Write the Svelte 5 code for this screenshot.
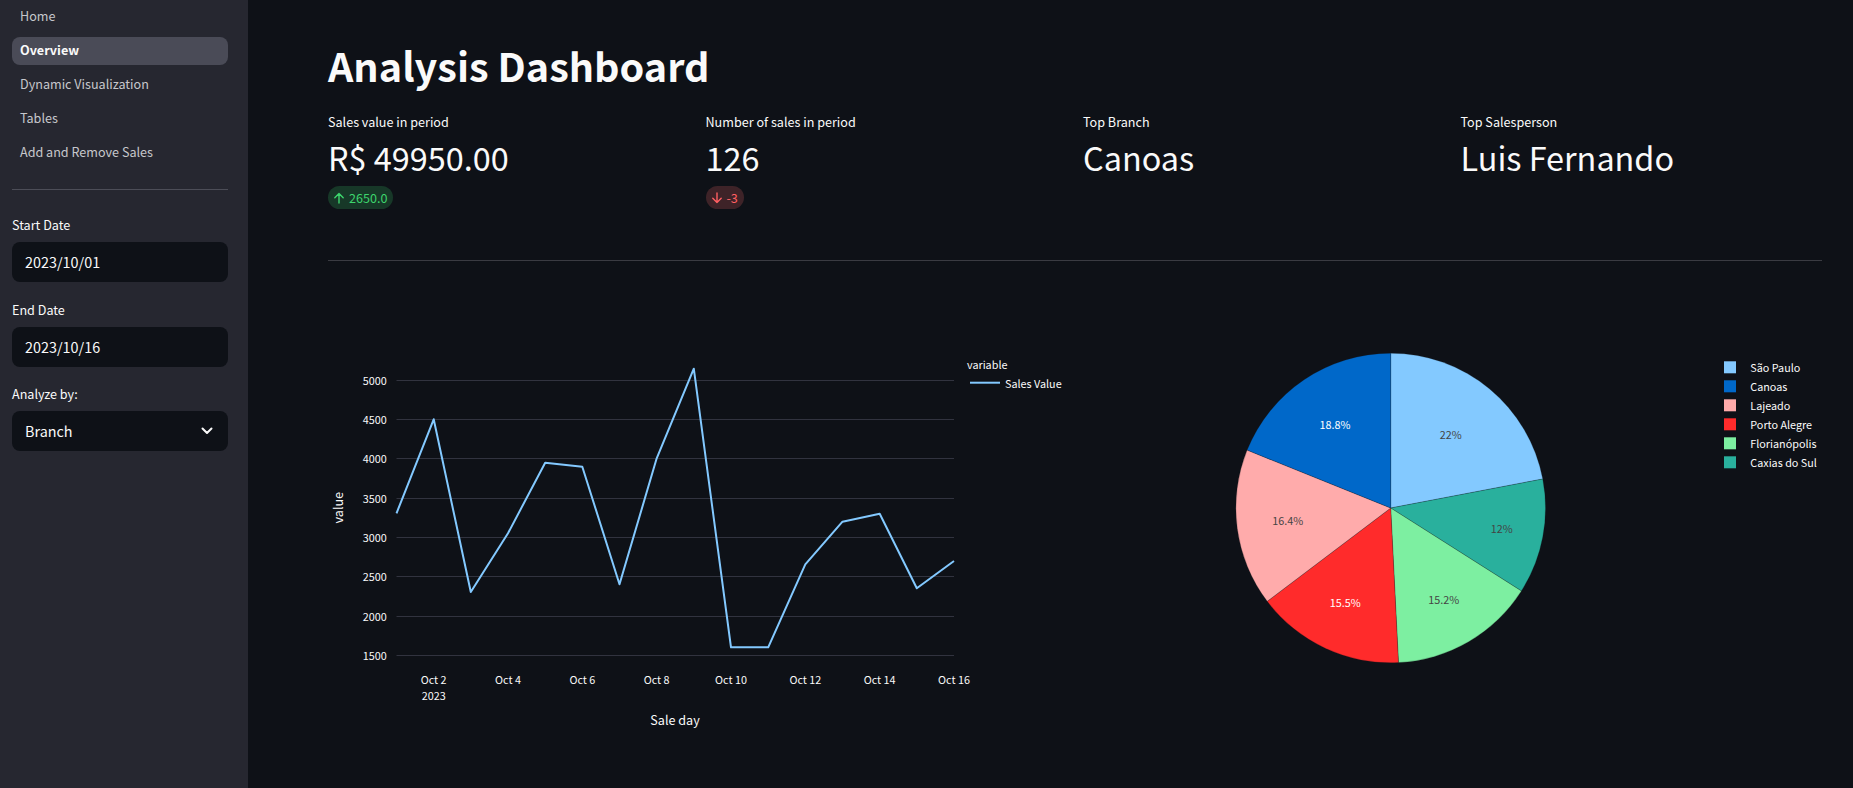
<script>
  const nav = ['Home', 'Overview', 'Dynamic Visualization', 'Tables', 'Add and Remove Sales'];

  const metrics = [
    { label: 'Sales value in period', value: 'R$ 49950.00', delta: '2650.0', dir: 'up' },
    { label: 'Number of sales in period', value: '126', delta: '-3', dir: 'down' },
    { label: 'Top Branch', value: 'Canoas' },
    { label: 'Top Salesperson', value: 'Luis Fernando' }
  ];

  // line chart: page-aligned coordinates through the svg viewBox
  const ticksY = [
    { t: '5000', y: 380.5 }, { t: '4500', y: 419.5 }, { t: '4000', y: 458.5 }, { t: '3500', y: 498.5 },
    { t: '3000', y: 537.5 }, { t: '2500', y: 576.5 }, { t: '2000', y: 616.5 }, { t: '1500', y: 655.5 }
  ];
  const x0 = 396.5;
  const dx = (954 - 396.5) / 15;
  const ys = [513.3, 419.3, 592, 533.3, 462.7, 466.7, 584.3, 458.3, 368.7, 647.3, 647.3, 564.3, 521.7, 513.7, 588.3, 561];
  const points = ys.map((y, i) => `${(x0 + dx * i).toFixed(1)},${y}`).join(' ');
  const ticksX = ['Oct 2', 'Oct 4', 'Oct 6', 'Oct 8', 'Oct 10', 'Oct 12', 'Oct 14', 'Oct 16']
    .map((t, i) => ({ t, x: x0 + dx * (1 + 2 * i) }));

  // pie
  const cx = 1390.7, cy = 508, r = 154.8;
  const slices = [
    { name: 'São Paulo', pct: 22, label: '22%', color: '#83c9ff', lx: 1450.7, ly: 435, ink: '#444' },
    { name: 'Caxias do Sul', pct: 12, label: '12%', color: '#29b09d', lx: 1501.7, ly: 529.3, ink: '#444' },
    { name: 'Florianópolis', pct: 15.2, label: '15.2%', color: '#7defa1', lx: 1443.7, ly: 600, ink: '#444' },
    { name: 'Porto Alegre', pct: 15.5, label: '15.5%', color: '#ff2b2b', lx: 1345.3, ly: 603.3, ink: '#fff' },
    { name: 'Lajeado', pct: 16.4, label: '16.4%', color: '#ffabab', lx: 1287.7, ly: 521.3, ink: '#444' },
    { name: 'Canoas', pct: 18.9, label: '18.8%', color: '#0068c9', lx: 1335, ly: 425.3, ink: '#fff' }
  ];
  let acc = 0;
  const arcs = slices.map((s) => {
    const a0 = (acc / 100) * 2 * Math.PI;
    acc += s.pct;
    const a1 = (acc / 100) * 2 * Math.PI;
    const large = s.pct > 50 ? 1 : 0;
    const d = `M${cx} ${cy}L${(cx + r * Math.sin(a0)).toFixed(2)} ${(cy - r * Math.cos(a0)).toFixed(2)}A${r} ${r} 0 ${large} 1 ${(cx + r * Math.sin(a1)).toFixed(2)} ${(cy - r * Math.cos(a1)).toFixed(2)}Z`;
    return { ...s, d };
  });
  const legendOrder = ['São Paulo', 'Canoas', 'Lajeado', 'Porto Alegre', 'Florianópolis', 'Caxias do Sul'];
  const legend = legendOrder.map((n) => slices.find((s) => s.name === n));
</script>

<div class="page">
  <aside class="sidebar">
    <nav class="nav">
      {#each nav as item}
        <div class="nav-item" class:active={item === 'Overview'}>{item}</div>
      {/each}
    </nav>
    <hr class="side-rule" />
    <div class="fields">
      <div class="field">
        <div class="field-label">Start Date</div>
        <div class="control">2023/10/01</div>
      </div>
      <div class="field">
        <div class="field-label">End Date</div>
        <div class="control">2023/10/16</div>
      </div>
      <div class="field">
        <div class="field-label">Analyze by:</div>
        <div class="control select">
          <span>Branch</span>
          <svg width="12" height="8" viewBox="0 0 12 8" fill="none"><path d="M1.5 1.5 6 6l4.5-4.5" stroke="#fafafa" stroke-width="2" stroke-linecap="round" stroke-linejoin="round" /></svg>
        </div>
      </div>
    </div>
  </aside>

  <main class="main">
    <h1 class="title">Analysis Dashboard</h1>

    <section class="metrics">
      {#each metrics as m}
        <div class="metric">
          <div class="metric-label">{m.label}</div>
          <div class="metric-value">{m.value}</div>
          {#if m.delta}
            <div class="delta {m.dir}">
              <svg width="14" height="14" viewBox="0 0 14 14" fill="none" stroke="currentColor" stroke-width="1.4" stroke-linecap="round" stroke-linejoin="round">
                {#if m.dir === 'up'}
                  <path d="M7 12V2.5M2.8 6.7 7 2.5l4.2 4.2" />
                {:else}
                  <path d="M7 2v9.5M2.8 7.3 7 11.5l4.2-4.2" />
                {/if}
              </svg>
              <span>{m.delta}</span>
            </div>
          {/if}
        </div>
      {/each}
    </section>

    <hr class="main-rule" />

    <section class="charts">
      <svg class="chart" width="739" height="450" viewBox="328 300 739 450">
        {#each ticksY as t}
          <line class="grid" x1={x0} x2="954" y1={t.y} y2={t.y} />
          <text class="tick" x="386.7" y={t.y + 4} text-anchor="end">{t.t}</text>
        {/each}
        <polyline class="series" {points} />
        {#each ticksX as t}
          <text class="tick" x={t.x} y="684" text-anchor="middle">{t.t}</text>
        {/each}
        <text class="tick" x={x0 + dx} y="700" text-anchor="middle">2023</text>
        <text class="axis" x="675" y="725" text-anchor="middle">Sale day</text>
        <text class="axis" transform="translate(343 507.7) rotate(-90)" text-anchor="middle">value</text>
        <text class="tick" x="967" y="369">variable</text>
        <line class="series" x1="970" x2="1000" y1="382.7" y2="382.7" />
        <text class="tick" x="1005" y="388">Sales Value</text>
      </svg>

      <svg class="chart" width="739" height="450" viewBox="1083 300 739 450">
        {#each arcs as a}
          <path d={a.d} fill={a.color} stroke="#0e1117" stroke-opacity="0.35" stroke-width="0.6" />
        {/each}
        {#each arcs as a}
          <text class="pie-label" x={a.lx} y={a.ly + 4} fill={a.ink} text-anchor="middle">{a.label}</text>
        {/each}
        {#each legend as l, i}
          <rect x="1724" y={361.3 + 19 * i} width="12" height="12" fill={l.color} />
          <text class="tick" x="1750.3" y={372.3 + 19 * i}>{l.name}</text>
        {/each}
      </svg>
    </section>
  </main>
</div>

<style>
  :global(body) {
    margin: 0;
    background: #0e1117;
    overflow: hidden;
  }
  .page {
    display: flex;
    height: 788px;
    overflow: hidden;
    background: #0e1117;
    color: #fafafa;
    font-family: "Noto Sans CJK SC", "Noto Sans", sans-serif;
  }
  .sidebar {
    flex: 0 0 248px;
    box-sizing: border-box;
    padding: 3px 20px 0 12px;
    background: #262730;
  }
  .nav {
    display: flex;
    flex-direction: column;
    gap: 6px;
  }
  .nav-item {
    height: 28px;
    padding-left: 8px;
    border-radius: 8px;
    font-size: 12.6px;
    line-height: 26px;
    color: #c6c7cc;
  }
  .nav-item.active {
    background: #4a4b57;
    color: #fafafa;
    font-weight: 700;
  }
  .side-rule {
    height: 1px;
    margin: 22px 0 26px;
    border: 0;
    background: #4c4d57;
  }
  .fields {
    display: flex;
    flex-direction: column;
    gap: 18.5px;
  }
  .field-label {
    height: 20px;
    margin-bottom: 6px;
    font-size: 12.6px;
    line-height: 18px;
  }
  .control {
    box-sizing: border-box;
    height: 40px;
    padding-left: 13px;
    border-radius: 8px;
    background: #0e1117;
    font-size: 14.4px;
    line-height: 39px;
  }
  .select {
    display: flex;
    align-items: center;
    justify-content: space-between;
    padding-right: 15px;
  }
  .select span {
    margin-top: -1px;
  }
  .main {
    flex: 1;
    min-width: 0;
    padding: 0 31px 0 80px;
  }
  .title {
    height: 112px;
    margin: 0;
    padding-top: 35px;
    box-sizing: border-box;
    font-size: 39.6px;
    font-weight: 700;
    line-height: 60px;
    color: #fafafa;
  }
  .metrics {
    display: grid;
    grid-template-columns: repeat(4, 1fr);
    gap: 16px;
    height: 97px;
  }
  .metric-label {
    height: 20px;
    font-size: 12.6px;
    line-height: 19px;
  }
  .metric-value {
    height: 50px;
    font-size: 32.4px;
    line-height: 50px;
  }
  .delta {
    display: inline-flex;
    align-items: center;
    gap: 3px;
    height: 23px;
    padding: 0 6px 0 4px;
    border-radius: 12px;
    font-size: 12.6px;
    line-height: 22px;
    margin-top: 4px;
  }
  .delta.up {
    background: rgba(61, 213, 109, 0.2);
    color: #3dd56d;
  }
  .delta.down {
    background: rgba(255, 108, 108, 0.2);
    color: #ff5f62;
  }
  .main-rule {
    height: 1px;
    margin: 51px 0 39px;
    border: 0;
    background: #3a3b42;
  }
  .charts {
    display: flex;
    gap: 16px;
  }
  .chart {
    display: block;
    flex: 0 0 739px;
  }
  .grid {
    stroke: #31333f;
    stroke-width: 1;
  }
  .series {
    fill: none;
    stroke: #83c9ff;
    stroke-width: 2;
    stroke-linejoin: round;
  }
  .tick {
    font-size: 10.8px;
    fill: #fafafa;
  }
  .axis {
    font-size: 12.6px;
    fill: #fafafa;
  }
  .pie-label {
    font-size: 10.8px;
  }
</style>
